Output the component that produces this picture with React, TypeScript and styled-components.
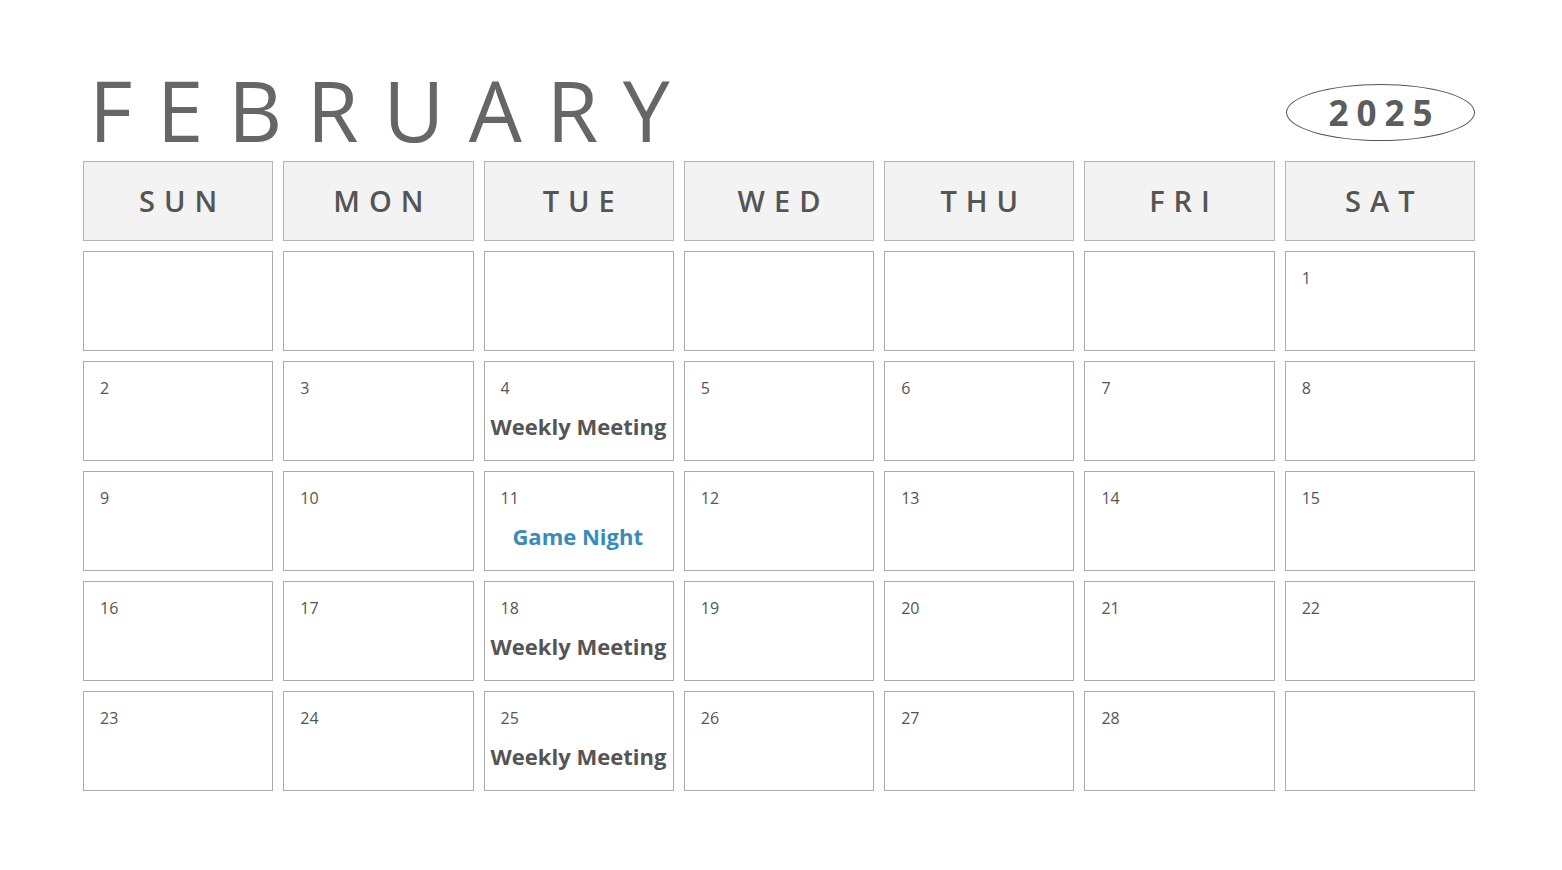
import { createGlobalStyle } from "styled-components";
import styled from "styled-components";

const GlobalStyle = createGlobalStyle`
  html, body {
    margin: 0;
    padding: 0;
    background: #ffffff;
  }
  body {
    font-family: "Open Sans", "Noto Sans", sans-serif;
    color: #555555;
  }
`;

const Page = styled.div`
  width: 1562px;
  height: 870px;
  box-sizing: border-box;
  padding: 68px 87px 0 83px;
`;

const Top = styled.div`
  display: flex;
  justify-content: space-between;
  align-items: flex-end;
  margin-bottom: 9px;
`;

const Month = styled.h1`
  margin: 0 0 0 6px;
  font-size: 84px;
  line-height: 1;
  font-weight: 500;
  letter-spacing: 24.5px;
  color: #666666;
`;

const Year = styled.div`
  width: 189px;
  height: 57px;
  margin-bottom: 11px;
  border: 1px solid #555555;
  border-radius: 50%;
  display: flex;
  align-items: center;
  justify-content: center;
  font-size: 35px;
  font-weight: 700;
  letter-spacing: 8px;
  padding-left: 8px;
  box-sizing: border-box;
  color: #5c5c5c;
`;

const Grid = styled.div`
  display: grid;
  grid-template-columns: repeat(7, 1fr);
  grid-template-rows: 80px repeat(5, 100px);
  column-gap: 10px;
  row-gap: 10px;
`;

const DayName = styled.div`
  background: #f3f3f3;
  border: 1px solid #b4b4b4;
  display: flex;
  align-items: center;
  justify-content: center;
  padding-bottom: 2px;
  font-size: 29px;
  font-weight: 600;
  letter-spacing: 9px;
  padding-left: 9px;
  color: #555555;
`;

const Cell = styled.div`
  border: 1px solid #ababab;
  padding: 16px 8px 0 16px;
  display: flex;
  flex-direction: column;
  min-width: 0;
`;

const DateNum = styled.span`
  font-size: 16px;
  line-height: 20px;
  color: #555555;
`;

const Event = styled.div<{ $accent?: boolean }>`
  margin: 14px 0 0 -10px;
  text-align: center;
  font-size: 22px;
  line-height: 28px;
  font-weight: 700;
  white-space: nowrap;
  color: ${(p) => (p.$accent ? "#3a8cb8" : "#555555")};
`;

const days = ["SUN", "MON", "TUE", "WED", "THU", "FRI", "SAT"];

const events: Record<number, { title: string; accent?: boolean }> = {
  4: { title: "Weekly Meeting" },
  11: { title: "Game Night", accent: true },
  18: { title: "Weekly Meeting" },
  25: { title: "Weekly Meeting" },
};

export default function App() {
  // february 2025 starts on a saturday
  const cells: (number | null)[] = [];
  for (let i = 0; i < 6; i++) cells.push(null);
  for (let d = 1; d <= 28; d++) cells.push(d);
  while (cells.length < 35) cells.push(null);

  return (
    <>
      <GlobalStyle />
      <Page>
        <Top>
          <Month>FEBRUARY</Month>
          <Year>2025</Year>
        </Top>
        <Grid>
          {days.map((d) => (
            <DayName key={d}>{d}</DayName>
          ))}
          {cells.map((d, i) => (
            <Cell key={i}>
              {d != null && <DateNum>{d}</DateNum>}
              {d != null && events[d] && (
                <Event $accent={events[d].accent}>{events[d].title}</Event>
              )}
            </Cell>
          ))}
        </Grid>
      </Page>
    </>
  );
}
